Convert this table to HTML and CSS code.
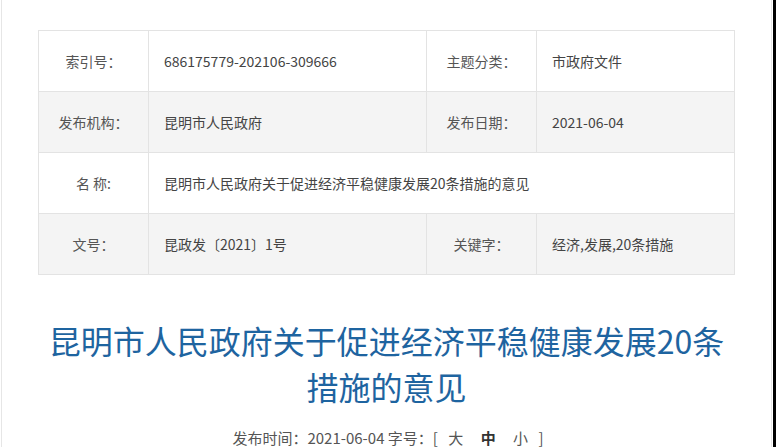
FILE: index.html
```html
<!DOCTYPE html>
<html>
<head>
    <meta charset="utf-8">
    <title>昆明市人民政府关于促进经济平稳健康发展20条措施的意见</title>
    <link rel="stylesheet" href="styles.css">
</head>
<body>
    <div class="page">
        <div class="frame">
            <table class="meta-table">
                <tr>
                    <td class="label">索引号：</td>
                    <td class="value">686175779-202106-309666</td>
                    <td class="label">主题分类：</td>
                    <td class="value">市政府文件</td>
                </tr>
                <tr class="gray">
                    <td class="label">发布机构：</td>
                    <td class="value">昆明市人民政府</td>
                    <td class="label">发布日期：</td>
                    <td class="value">2021-06-04</td>
                </tr>
                <tr>
                    <td class="label">名 称:</td>
                    <td class="value" colspan="3">昆明市人民政府关于促进经济平稳健康发展20条措施的意见</td>
                </tr>
                <tr class="gray">
                    <td class="label">文号：</td>
                    <td class="value">昆政发〔2021〕1号</td>
                    <td class="label">关键字：</td>
                    <td class="value">经济,发展,20条措施</td>
                </tr>
            </table>

            <h1 class="title">昆明市人民政府关于促进经济平稳健康发展20条<br>措施的意见</h1>

            <div class="info">
                发布时间：2021-06-04 字号：[ <span class="size">大</span> <span class="size cur">中</span> <span class="size">小</span> ]
            </div>
        </div>
    </div>
</body>
</html>
```

FILE: styles.css
```css
body {
    margin: 0;
    background-color: #000;
    font-family: "Noto Sans CJK SC", "Liberation Sans", sans-serif;
}

.page {
    width: 773px;
    height: 447px;
    background-color: #fff;
    overflow: hidden;
}

.frame {
    margin: 0 1px;
    height: 447px;
    border-left: 1px solid #e6e6e6;
    border-right: 1px solid #e6e6e6;
    padding-top: 30px;
    box-sizing: border-box;
}

.meta-table {
    width: 697px;
    margin-left: 36px;
    border-collapse: collapse;
    font-size: 14px;
    table-layout: fixed;
}

.meta-table td {
    height: 60px;
    border: 1px solid #e3e3e3;
    line-height: 20px;
    padding: 0;
}

.meta-table tr.gray td {
    background-color: #f4f4f4;
}

.meta-table td.label {
    width: 109px;
    text-align: center;
    color: #555;
}

.meta-table td.value {
    padding-left: 15px;
    color: #444;
}

.meta-table td:nth-child(2) {
    width: 262px;
}

.title {
    margin: 42px 0 0;
    text-align: center;
    font-size: 32px;
    font-weight: normal;
    line-height: 46px;
    color: #1e64a0;
    letter-spacing: 0;
}

.info {
    margin-top: 19px;
    text-align: center;
    font-size: 15px;
    line-height: 20px;
    color: #555;
    padding-left: 3px;
}

.info .size {
    margin: 0 7px;
}

.info .cur {
    font-weight: bold;
    color: #333;
}
```
